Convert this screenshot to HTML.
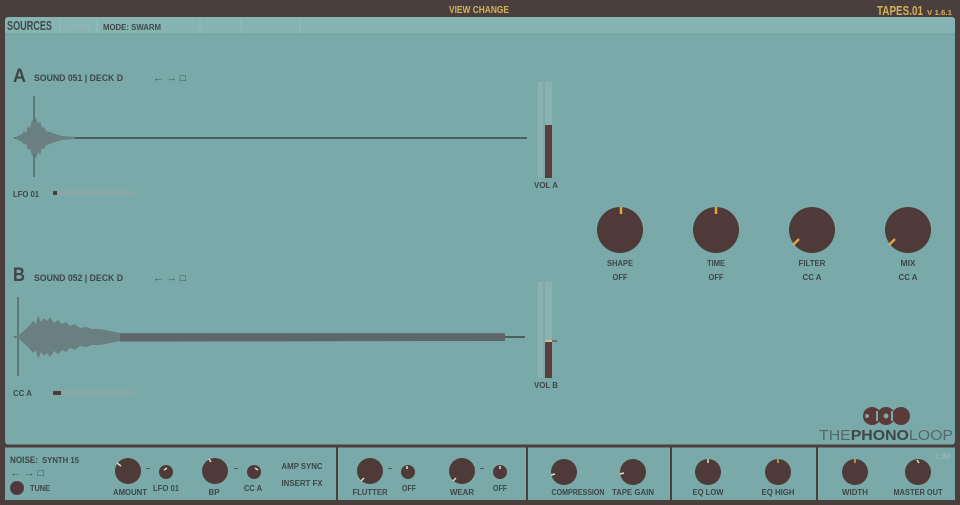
<!DOCTYPE html>
<html><head><meta charset="utf-8"><style>
html,body{margin:0;padding:0;background:#4a3f3d;}
svg{display:block}
text{font-family:"Liberation Sans Narrow","Liberation Sans",sans-serif;font-weight:bold;}
</style></head><body>
<svg width="960" height="505" viewBox="0 0 960 505" xmlns="http://www.w3.org/2000/svg">
<rect width="960" height="505" fill="#4a3f3d"/>
<rect x="5" y="17" width="950" height="428" rx="4" fill="#7aa9a9"/>
<rect x="5" y="17" width="950" height="17" rx="3" fill="#86b4b3"/>
<line x1="5" y1="34" x2="955" y2="34" stroke="#6f9b9b" stroke-width="1"/>
<g stroke="#95bcbc" stroke-width="1"><line x1="60" y1="19" x2="60" y2="33"/><line x1="97" y1="19" x2="97" y2="33"/><line x1="200" y1="19" x2="200" y2="33"/><line x1="241" y1="19" x2="241" y2="33"/><line x1="300" y1="19" x2="300" y2="33"/></g>
<text x="449" y="13" fill="#d3b25a" font-size="10" textLength="60" lengthAdjust="spacingAndGlyphs">VIEW CHANGE</text>
<text x="877" y="15" fill="#d3b25a" font-size="13" textLength="46" lengthAdjust="spacingAndGlyphs">TAPES.01</text>
<text x="927" y="15" fill="#d3b25a" font-size="7" textLength="25" lengthAdjust="spacingAndGlyphs">V 1.6.1</text>
<text x="7" y="30" fill="#3e4a4c" font-size="13" textLength="45" lengthAdjust="spacingAndGlyphs">SOURCES</text>
<text x="65" y="30" fill="#97b4b4" font-size="8" textLength="25" lengthAdjust="spacingAndGlyphs">LATCH</text>
<text x="103" y="30" fill="#3e4a4c" font-size="8" textLength="58" lengthAdjust="spacingAndGlyphs">MODE: SWARM</text>

<!-- Deck A -->
<text x="13" y="82" fill="#3e4648" font-size="19" textLength="13" lengthAdjust="spacingAndGlyphs">A</text>
<text x="34" y="81" fill="#3e4648" font-size="9" textLength="89" lengthAdjust="spacingAndGlyphs">SOUND 051 | DECK D</text>
<text x="153" y="81" fill="#3e4648" font-size="9" textLength="33" lengthAdjust="spacingAndGlyphs">← → □</text>
<line x1="34" y1="96" x2="34" y2="177" stroke="#3e4648" stroke-width="1"/>
<line x1="14" y1="138" x2="527" y2="138" stroke="#3e4648" stroke-width="1.5"/>
<polygon points="14,138 18,136 22,134 24,131 26,133 28,126 30,128 32,120 34,122 36,117 38,124 40,121 42,128 44,127 46,131 50,132 55,134 62,136 75,137 75,139 62,140 55,142 50,144 46,145 44,149 42,148 40,155 38,152 36,159 34,154 32,156 30,148 28,150 26,143 24,145 22,142 18,140" fill="#6a7f82"/>
<text x="13" y="197" fill="#3e4648" font-size="8" textLength="26" lengthAdjust="spacingAndGlyphs">LFO 01</text>
<rect x="53" y="191" width="81" height="4" fill="#8aa8a8"/>
<rect x="53" y="191" width="4" height="4" fill="#4e3a38"/>
<rect x="538" y="82" width="5" height="96" fill="#8cb1b1"/>
<rect x="545" y="82" width="7" height="96" fill="#8cb1b1"/>
<rect x="545" y="125" width="7" height="53" fill="#5b3e3c"/>
<text x="534" y="188" fill="#3e4648" font-size="8" textLength="24" lengthAdjust="spacingAndGlyphs">VOL A</text>

<!-- Deck B -->
<text x="13" y="281" fill="#3e4648" font-size="19" textLength="12" lengthAdjust="spacingAndGlyphs">B</text>
<text x="34" y="281" fill="#3e4648" font-size="9" textLength="89" lengthAdjust="spacingAndGlyphs">SOUND 052 | DECK D</text>
<text x="153" y="281" fill="#3e4648" font-size="9" textLength="33" lengthAdjust="spacingAndGlyphs">← → □</text>
<line x1="18" y1="297" x2="18" y2="376" stroke="#3e4648" stroke-width="1"/>
<line x1="14" y1="337" x2="525" y2="337" stroke="#3e4648" stroke-width="1.5"/>
<polygon points="14,337 20,334 26,329 30,325 33,321 36,324 38,315 41,322 44,318 47,321 50,317 54,323 58,320 62,324 66,322 70,326 75,324 80,328 86,327 92,329 100,329 110,331 120,333 505,333 505,341 120,341 110,343 100,345 92,345 86,347 80,346 75,350 70,348 66,352 62,350 58,354 54,351 50,357 47,353 44,356 41,352 38,359 36,350 33,353 30,349 26,345 20,340" fill="#6a7f82"/>
<polygon points="120,333.5 505,333.5 505,341 120,341.5" fill="#5d6668"/>
<text x="13" y="396" fill="#3e4648" font-size="8" textLength="19" lengthAdjust="spacingAndGlyphs">CC A</text>
<rect x="53" y="391" width="81" height="4" fill="#8aa8a8"/>
<rect x="53" y="391" width="8" height="4" fill="#4e3a38"/>
<rect x="538" y="282" width="5" height="96" fill="#8cb1b1"/>
<rect x="545" y="282" width="7" height="96" fill="#8cb1b1"/>
<rect x="545" y="341" width="7" height="37" fill="#5b3e3c"/>
<rect x="545" y="340" width="7" height="2" fill="#d9c07a"/>
<line x1="552" y1="341" x2="557" y2="341" stroke="#3e4648"/>
<text x="534" y="388" fill="#3e4648" font-size="8" textLength="24" lengthAdjust="spacingAndGlyphs">VOL B</text>

<g fill="#4e3a38">
<circle cx="620" cy="230" r="23"/><circle cx="716" cy="230" r="23"/><circle cx="812" cy="230" r="23"/><circle cx="908" cy="230" r="23"/>
</g>
<g stroke="#e0a545" stroke-width="2.5">
<line x1="621" y1="207" x2="621" y2="214"/><line x1="716" y1="207" x2="716" y2="214"/>
<line x1="793" y1="245" x2="799" y2="239"/><line x1="889" y1="245" x2="895" y2="239"/>
</g>
<g fill="#3e4648" font-size="8" text-anchor="middle">
<text x="620" y="266" textLength="26" lengthAdjust="spacingAndGlyphs">SHAPE</text><text x="620" y="280" textLength="15" lengthAdjust="spacingAndGlyphs">OFF</text>
<text x="716" y="266" textLength="18" lengthAdjust="spacingAndGlyphs">TIME</text><text x="716" y="280" textLength="15" lengthAdjust="spacingAndGlyphs">OFF</text>
<text x="812" y="266" textLength="27" lengthAdjust="spacingAndGlyphs">FILTER</text><text x="812" y="280" textLength="19" lengthAdjust="spacingAndGlyphs">CC A</text>
<text x="908" y="266" textLength="15" lengthAdjust="spacingAndGlyphs">MIX</text><text x="908" y="280" textLength="19" lengthAdjust="spacingAndGlyphs">CC A</text>
</g>

<!-- logo -->
<g fill="#5b3a38">
<circle cx="872" cy="416" r="9"/><circle cx="886" cy="416" r="9"/><circle cx="901" cy="416" r="9"/>
</g>
<g fill="#7aa9a9"><circle cx="867" cy="416" r="2"/><circle cx="886" cy="416" r="2.5"/><rect x="876" y="411" width="2" height="10"/><rect x="891" y="411" width="2" height="10"/></g>
<text x="819" y="440" font-size="15" fill="#56686b" style="font-weight:normal;font-family:'Liberation Sans',sans-serif" textLength="134" lengthAdjust="spacingAndGlyphs">THE<tspan fill="#3e4648" font-weight="bold">PHONO</tspan>LOOP</text>

<!-- bottom -->
<rect x="5" y="447" width="950" height="53" fill="#7aa9a9"/>
<line x1="5" y1="446" x2="955" y2="446" stroke="#4a3f3d" stroke-width="3"/>
<g stroke="#4a3f3d" stroke-width="2"><line x1="337" y1="447" x2="337" y2="500"/><line x1="527" y1="447" x2="527" y2="500"/><line x1="671" y1="447" x2="671" y2="500"/><line x1="817" y1="447" x2="817" y2="500"/></g>
<text x="10" y="463" fill="#3e4648" font-size="9" textLength="28" lengthAdjust="spacingAndGlyphs">NOISE:</text>
<text x="42" y="463" fill="#3e4648" font-size="8" textLength="37" lengthAdjust="spacingAndGlyphs">SYNTH 15</text>
<text x="10" y="476" fill="#3e4648" font-size="9" textLength="34" lengthAdjust="spacingAndGlyphs">← → □</text>
<circle cx="17" cy="488" r="7" fill="#4e3a38"/>
<text x="30" y="491" fill="#3e4648" font-size="8" textLength="20" lengthAdjust="spacingAndGlyphs">TUNE</text>
<g fill="#4e3a38">
<circle cx="128" cy="471" r="13"/><circle cx="166" cy="472" r="7"/>
<circle cx="215" cy="471" r="13"/><circle cx="254" cy="472" r="7"/>
<circle cx="370" cy="471" r="13"/><circle cx="408" cy="472" r="7"/>
<circle cx="462" cy="471" r="13"/><circle cx="500" cy="472" r="7"/>
<circle cx="564" cy="472" r="13"/><circle cx="633" cy="472" r="13"/>
<circle cx="708" cy="472" r="13"/><circle cx="778" cy="472" r="13"/>
<circle cx="855" cy="472" r="13"/><circle cx="918" cy="472" r="13"/>
</g>
<g stroke="#e8dcc8" stroke-width="1.5">
<line x1="117" y1="463" x2="121" y2="466"/><line x1="164" y1="470" x2="167" y2="468"/>
<line x1="209" y1="459" x2="211" y2="462"/><line x1="255" y1="468" x2="258" y2="470"/>
<line x1="361" y1="481" x2="364" y2="478"/><line x1="407" y1="466" x2="407" y2="469"/>
<line x1="453" y1="481" x2="456" y2="478"/><line x1="500" y1="466" x2="500" y2="469"/>
<line x1="551" y1="475" x2="555" y2="474"/><line x1="620" y1="474" x2="624" y2="473"/>
<line x1="708" y1="459" x2="708" y2="463"/><line x1="917" y1="460" x2="919" y2="463"/>
</g>
<g stroke="#e0a545" stroke-width="1.5"><line x1="778" y1="459" x2="778" y2="463"/><line x1="855" y1="459" x2="855" y2="463"/></g>
<g fill="#3e4648" font-size="8" text-anchor="middle">
<text x="148" y="471">–</text><text x="236" y="471">–</text><text x="390" y="471">–</text><text x="482" y="471">–</text>
<text x="130" y="495" textLength="34" lengthAdjust="spacingAndGlyphs">AMOUNT</text><text x="166" y="491" textLength="26" lengthAdjust="spacingAndGlyphs">LFO 01</text>
<text x="214" y="495" textLength="11" lengthAdjust="spacingAndGlyphs">BP</text><text x="253" y="491" textLength="18" lengthAdjust="spacingAndGlyphs">CC A</text>
<text x="302" y="469" textLength="41" lengthAdjust="spacingAndGlyphs">AMP SYNC</text><text x="302" y="486" textLength="41" lengthAdjust="spacingAndGlyphs">INSERT FX</text>
<text x="370" y="495" textLength="35" lengthAdjust="spacingAndGlyphs">FLUTTER</text><text x="409" y="491" textLength="14" lengthAdjust="spacingAndGlyphs">OFF</text>
<text x="462" y="495" textLength="24" lengthAdjust="spacingAndGlyphs">WEAR</text><text x="500" y="491" textLength="14" lengthAdjust="spacingAndGlyphs">OFF</text>
<text x="578" y="495" textLength="53" lengthAdjust="spacingAndGlyphs">COMPRESSION</text><text x="633" y="495" textLength="42" lengthAdjust="spacingAndGlyphs">TAPE GAIN</text>
<text x="708" y="495" textLength="31" lengthAdjust="spacingAndGlyphs">EQ LOW</text><text x="778" y="495" textLength="33" lengthAdjust="spacingAndGlyphs">EQ HIGH</text>
<text x="855" y="495" textLength="26" lengthAdjust="spacingAndGlyphs">WIDTH</text><text x="918" y="495" textLength="49" lengthAdjust="spacingAndGlyphs">MASTER OUT</text>
</g>
<text x="936" y="459" fill="#97b4b4" font-size="8" textLength="15" lengthAdjust="spacingAndGlyphs">LIM</text>
</svg>
</body></html>
